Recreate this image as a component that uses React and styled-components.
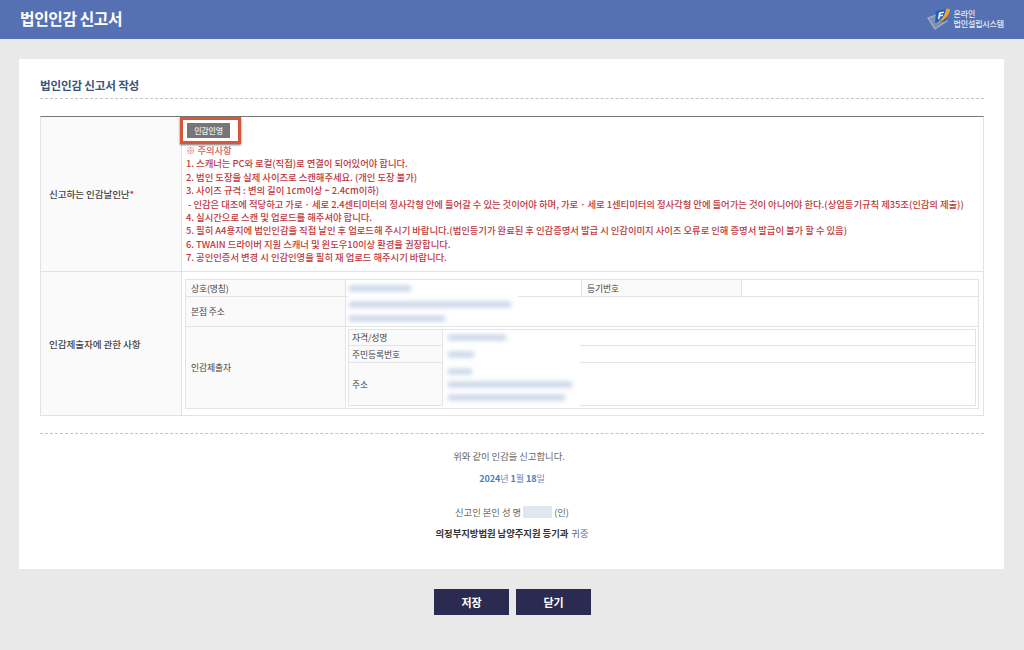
import styled, { createGlobalStyle } from 'styled-components';

const GlobalStyle = createGlobalStyle`
  html, body {
    margin: 0;
    padding: 0;
    background: #e9e9e9;
    font-family: "Noto Sans CJK KR", "Noto Sans", sans-serif;
    overflow: hidden;
  }
`;

const Page = styled.div`
  width: 1024px;
  height: 650px;
  display: flex;
  flex-direction: column;
`;

const Header = styled.header`
  height: 39px;
  flex: none;
  background: #5571b4;
  box-sizing: border-box;
  padding: 0 20px 0 20px;
  display: flex;
  align-items: center;
  justify-content: space-between;
`;

const PageTitle = styled.h1`
  margin: 0 0 2px;
  font-size: 15.8px;
  line-height: 20px;
  font-weight: 700;
  letter-spacing: -0.4px;
  color: #fff;
`;

const Logo = styled.div`
  display: flex;
  align-items: center;
  gap: 3px;
  margin-bottom: 1px;
`;

const LogoText = styled.div`
  font-size: 8px;
  line-height: 10.5px;
  font-weight: 500;
  color: #e8ecf6;
  letter-spacing: -0.15px;
`;

const Card = styled.main`
  margin: 20px 20px 0 19px;
  height: 510px;
  flex: none;
  box-sizing: border-box;
  background: #fff;
  padding: 17px 20px 0 21px;
`;

const SectionTitle = styled.h2`
  margin: 0;
  height: 22px;
  font-size: 11.6px;
  line-height: 18px;
  font-weight: 700;
  letter-spacing: -0.2px;
  color: #3a5480;
  border-bottom: 1px dashed #c4c4c4;
`;

const FormGrid = styled.div`
  margin-top: 17px;
  border-top: 1px solid #777;
  border-left: 1px solid #e2e2e2;
  border-right: 1px solid #e2e2e2;
  display: grid;
  grid-template-columns: 141px 1fr;
`;

const RowHead = styled.div`
  background: #fafafa;
  border-right: 1px solid #e2e2e2;
  border-bottom: 1px solid #e2e2e2;
  display: flex;
  align-items: center;
  box-sizing: border-box;
  padding-left: 8px;
  height: ${(p) => p.$h}px;
  font-size: 9.6px;
  font-weight: 500;
  color: #444;
  letter-spacing: -0.1px;

  em {
    font-style: normal;
    color: #c8302f;
  }
`;

const RowBody = styled.div`
  position: relative;
  border-bottom: 1px solid #e2e2e2;
  box-sizing: border-box;
  height: ${(p) => p.$h}px;
  padding: ${(p) => p.$pad};
`;

const Highlight = styled.div`
  width: 61px;
  height: 27px;
  margin-left: -2px;
  box-sizing: border-box;
  border: 3px solid #d8573a;
  box-shadow: 0 1px 2px rgba(0, 0, 0, 0.55);
  display: flex;
  align-items: center;
  padding-left: 4px;
`;

const SealButton = styled.button`
  width: 43px;
  height: 15px;
  border: 0;
  padding: 0;
  background: #767676;
  color: #eee;
  font-family: inherit;
  font-size: 8px;
  line-height: 15px;
  font-weight: 500;
  letter-spacing: -0.2px;
`;

const Notice = styled.div`
  padding-left: 4px;
  color: #c0373c;
  font-size: 9.39px;
  line-height: 13.37px;
  font-weight: 500;
  white-space: nowrap;
  letter-spacing: -0.05px;
`;

const NoticeMark = styled.span`
  color: #d4605f;
`;

const Info = styled.table`
  border-collapse: collapse;
  table-layout: fixed;
  width: ${(p) => p.$w}px;
  height: ${(p) => p.$h}px;
  font-size: 8.8px;
  color: #444;
  background: #fff;

  th, td {
    border: 1px solid #e4e4e4;
    padding: 0;
    font-weight: 400;
    text-align: left;
    vertical-align: middle;
  }

  th {
    background: #fafafa;
    padding-left: ${(p) => p.$labelPad}px;
    letter-spacing: -0.1px;
  }
`;

const NestedCell = styled.td`
  && {
    padding: 2px;
    background: #fff;
  }
`;

const ThinRow = styled.tr`
  height: ${(p) => p.$h}px;
`;

// white patch the blurred values sit on, it hides the table lines below them
const Mask = styled.div`
  position: absolute;
  left: ${(p) => p.$left}px;
  top: ${(p) => p.$top}px;
  width: ${(p) => p.$w}px;
  height: ${(p) => p.$h}px;
  background: #fff;
`;

const BlurLines = styled.div`
  position: relative;
  z-index: 1;
  display: flex;
  flex-direction: column;
  gap: ${(p) => p.$gap || 6}px;
  padding-left: ${(p) => p.$left || 3}px;
`;

const Blur = styled.span`
  display: block;
  width: ${(p) => p.$w}px;
  height: 5px;
  background: #a9bddb;
  opacity: 0.75;
  filter: blur(2.4px);
`;

const Dashed = styled.hr`
  margin: 17px 0 0;
  border: 0;
  border-top: 1px dashed #c4c4c4;
`;

const Declaration = styled.div`
  display: flex;
  flex-direction: column;
  align-items: center;
  font-size: 9.4px;
  color: #666;
  letter-spacing: -0.05px;
`;

const Line = styled.p`
  margin: ${(p) => p.$top}px ${(p) => p.$right || 0}px 0 0;
  line-height: 14px;
  display: flex;
  align-items: center;
`;

const DateLine = styled(Line)`
  color: #5d87b8;
  font-size: 9px;

  b {
    color: #3f7fc0;
    font-weight: 700;
  }
`;

const NameBlur = styled.span`
  display: inline-block;
  width: 29px;
  height: 12px;
  margin: 0 2px;
  background: #dfe6f0;
`;

const Court = styled.b`
  color: #333;
  font-weight: 700;
  margin-right: 3px;
`;

const Actions = styled.div`
  margin-top: 20px;
  padding-left: 1px;
  display: flex;
  justify-content: center;
  gap: 7px;
`;

const ActionButton = styled.button`
  width: 75px;
  height: 26px;
  border: 0;
  padding: 0;
  background: #2b2b52;
  color: #fff;
  font-family: inherit;
  font-size: 11px;
  font-weight: 700;
`;

const notices = [
  '1. 스캐너는 PC와 로컬(직접)로 연결이 되어있어야 합니다.',
  '2. 법인 도장을 실제 사이즈로 스캔해주세요. (개인 도장 불가)',
  '3. 사이즈 규격 : 변의 길이 1cm이상 ~ 2.4cm이하)',
  '\u00a0- 인감은 대조에 적당하고 가로 · 세로 2.4센티미터의 정사각형 안에 들어갈 수 있는 것이어야 하며, 가로 · 세로 1센티미터의 정사각형 안에 들어가는 것이 아니어야 한다.(상업등기규칙 제35조(인감의 제출))',
  '4. 실시간으로 스캔 및 업로드를 해주셔야 합니다.',
  '5. 필히 A4용지에 법인인감을 직접 날인 후 업로드해 주시기 바랍니다.(법인등기가 완료된 후 인감증명서 발급 시 인감이미지 사이즈 오류로 인해 증명서 발급이 불가 할 수 있음)',
  '6. TWAIN 드라이버 지원 스캐너 및 윈도우10이상 환경을 권장합니다.',
  '7. 공인인증서 변경 시 인감인영을 필히 재 업로드 해주시기 바랍니다.',
];

const LogoMark = () => (
  <svg width="24" height="22" viewBox="0 0 24 22">
    <path d="M1 10 L12 6 L20 13 L8 21 Z" fill="#7f90b8" stroke="#aab2c4" strokeWidth="1.2" />
    <path d="M9 3 L22 0.5 L19 13 L8 15 Z" fill="#1f5fc0" />
    <path d="M22 0.5 L23 2 C21 9 17 13 9 15.5 C14 12 18 8 19 1 Z" fill="#f0a22e" />
    <path d="M12 4.5 L17 3.6 L16.7 5 L13.6 5.6 L13.3 7 L16 6.5 L15.7 7.9 L13 8.4 L12.4 11 L10.9 11.3 Z" fill="#fff" />
  </svg>
);

const App = () => {
  return (
    <Page>
      <GlobalStyle />
      <Header>
        <PageTitle>법인인감 신고서</PageTitle>
        <Logo>
          <LogoMark />
          <LogoText>
            온라인
            <br />
            법인설립시스템
          </LogoText>
        </Logo>
      </Header>

      <Card>
        <SectionTitle>법인인감 신고서 작성</SectionTitle>

        <FormGrid>
          <RowHead $h={155}>
            신고하는 인감날인난<em>*</em>
          </RowHead>
          <RowBody $h={155} $pad="0">
            <Highlight>
              <SealButton>인감인영</SealButton>
            </Highlight>
            <Notice>
              <NoticeMark>※ 주의사항</NoticeMark>
              {notices.map((text) => (
                <div key={text}>{text}</div>
              ))}
            </Notice>
          </RowBody>

          <RowHead $h={144}>인감제출자에 관한 사항</RowHead>
          <RowBody $h={144} $pad="7px 4px 0 3px">
            <Info $w={794} $h={129} $labelPad={5}>
              <colgroup>
                <col width="160" />
                <col width="236" />
                <col width="160" />
                <col />
              </colgroup>
              <tbody>
                <ThinRow $h={17}>
                  <th>상호(명칭)</th>
                  <td>
                    <BlurLines>
                      <Blur $w={62} />
                    </BlurLines>
                  </td>
                  <th>등기번호</th>
                  <td />
                </ThinRow>
                <ThinRow $h={30}>
                  <th>본점 주소</th>
                  <td colSpan={3}>
                    <BlurLines $gap={9}>
                      <Blur $w={162} />
                      <Blur $w={96} />
                    </BlurLines>
                  </td>
                </ThinRow>
                <tr>
                  <th>인감제출자</th>
                  <NestedCell colSpan={3}>
                    <Info $w={628} $h={77} $labelPad={3}>
                      <colgroup>
                        <col width="94" />
                        <col />
                      </colgroup>
                      <tbody>
                        <ThinRow $h={16}>
                          <th>자격/성명</th>
                          <td>
                            <BlurLines $left={5}>
                              <Blur $w={58} />
                            </BlurLines>
                          </td>
                        </ThinRow>
                        <ThinRow $h={17}>
                          <th>주민등록번호</th>
                          <td>
                            <BlurLines $left={5}>
                              <Blur $w={26} />
                            </BlurLines>
                          </td>
                        </ThinRow>
                        <tr>
                          <th>주소</th>
                          <td>
                            <BlurLines $left={5} $gap={8}>
                              <Blur $w={24} />
                              <Blur $w={124} />
                              <Blur $w={117} />
                            </BlurLines>
                          </td>
                        </tr>
                      </tbody>
                    </Info>
                  </NestedCell>
                </tr>
              </tbody>
            </Info>
            <Mask $left={166} $top={10} $w={170} $h={44} />
            <Mask $left={261} $top={59} $w={137} $h={75} />
          </RowBody>
        </FormGrid>

        <Dashed />

        <Declaration>
          <Line $top={15} $right={6}>위와 같이 인감을 신고합니다.</Line>
          <DateLine $top={9}>
            <span>
              <b>2024</b>년 <b>1</b>월 <b>18</b>일
            </span>
          </DateLine>
          <Line $top={19}>
            신고인 본인 성 명<NameBlur />
            (인)
          </Line>
          <Line $top={7}>
            <Court>의정부지방법원 남양주지원 등기과</Court>귀중
          </Line>
        </Declaration>
      </Card>

      <Actions>
        <ActionButton>저장</ActionButton>
        <ActionButton>닫기</ActionButton>
      </Actions>
    </Page>
  );
};

export default App;
